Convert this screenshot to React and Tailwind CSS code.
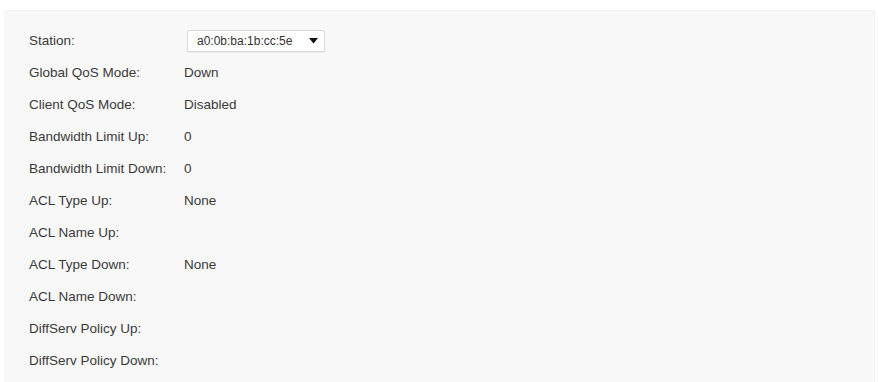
import React from "react";

const rows = [
  ["Global QoS Mode:", "Down"],
  ["Client QoS Mode:", "Disabled"],
  ["Bandwidth Limit Up:", "0"],
  ["Bandwidth Limit Down:", "0"],
  ["ACL Type Up:", "None"],
  ["ACL Name Up:", ""],
  ["ACL Type Down:", "None"],
  ["ACL Name Down:", ""],
  ["DiffServ Policy Up:", ""],
  ["DiffServ Policy Down:", ""],
];

export default function App() {
  return (
    <div className="w-[878px] h-[382px] bg-white overflow-hidden pt-[10px] pl-[4px] pr-[3px]" style={{ fontFamily: '"Liberation Sans", Arial, sans-serif' }}>
      <div className="h-[372px] bg-[#f8f8f8] border-t border-r border-[#f2f2f2] pt-[14px] pl-[25px] text-[13.5px] text-[#3a3a3a]">
        <div className="flex items-center h-8">
          <div className="w-[155px] shrink-0">Station:</div>
          <div className="ml-[3px] flex items-center justify-between w-[138px] h-[22px] bg-white border border-[#d9d9d9] rounded-[2px] pl-[9px] pr-[6px] text-[12px] text-[#333] shadow-[0_1px_1px_rgba(0,0,0,0.06)]">
            <span>a0:0b:ba:1b:cc:5e</span>
            <svg width="9" height="6" viewBox="0 0 9 6"><path d="M0 0 L9 0 L4.5 5.5 Z" fill="#111" /></svg>
          </div>
        </div>
        {rows.map(([l, v]) => (
          <div key={l} className="flex items-center h-8">
            <div className="w-[155px] shrink-0">{l}</div>
            <div>{v}</div>
          </div>
        ))}
      </div>
    </div>
  );
}
